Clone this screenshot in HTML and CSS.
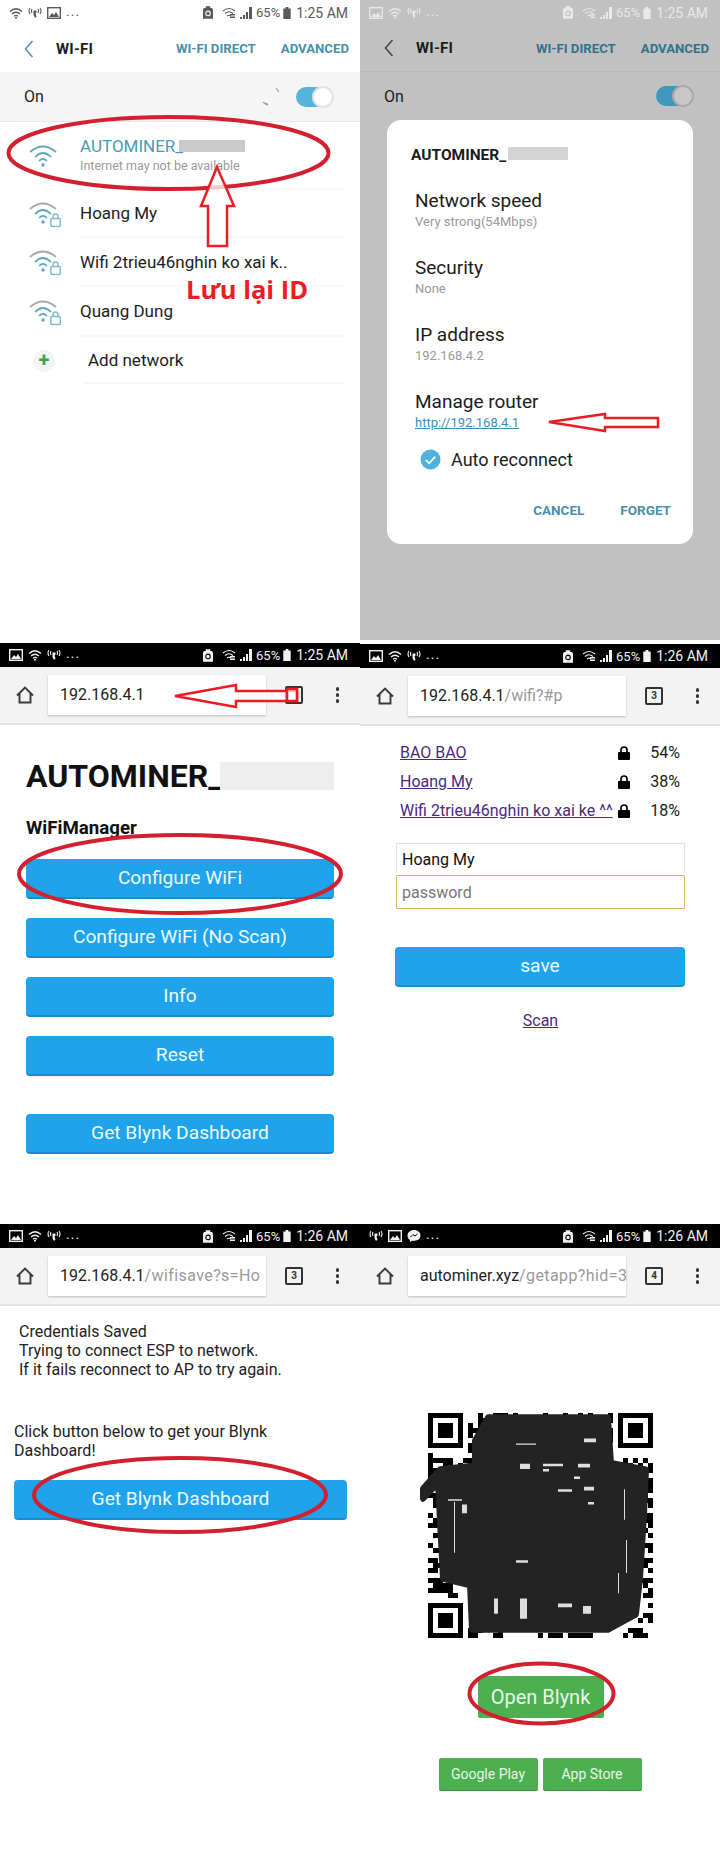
FILE: index.html
```html
<!DOCTYPE html>
<html lang="vi">
<head>
    <meta charset="UTF-8">
    <meta name="viewport" content="width=device-width, initial-scale=1.0">
    <title>Autominer WiFi</title>
    <link rel="stylesheet" href="styles.css">
</head>
<body>
    <svg class="defs">
        <symbol id="i-wifi" viewBox="0 0 14 12"><path d="M1 4.500Q7-1 13 4.500M3 7Q7 3.500 11 7M5 9.200Q7 7.700 9 9.200" fill="none" stroke="currentColor" stroke-width="1.300"/><circle cx="7" cy="10.800" r="1" fill="currentColor"/></symbol>
        <symbol id="i-call" viewBox="0 0 14 12"><path d="M2 1Q0 4 2 7M12 1Q14 4 12 7M4 2Q3 4 4 6M10 2Q11 4 10 6" fill="none" stroke="currentColor" stroke-width="1.100"/><path d="M5.500 3.500h3v2l-1 1 1 3-1.500 1.500-1.500-3v-2z" fill="currentColor"/></symbol>
        <symbol id="i-image" viewBox="0 0 14 12"><rect x=".7" y=".7" width="12.600" height="10.600" fill="none" stroke="currentColor" stroke-width="1.400"/><path d="M2 10l3-4 2 2 2-3 3 5z" fill="currentColor"/></symbol>
        <symbol id="i-chat" viewBox="0 0 14 12"><path d="M7 0C3 0 .5 2.500.5 5.500c0 2 1 3.500 2.500 4.500v2l2-1.200c3 .6 8.500-.8 8.500-5.300C13.500 2.500 11 0 7 0z" fill="currentColor"/><path d="M3.500 7l2.500-2.500 2 1.500 2.500-2" fill="none" stroke="#000" stroke-width="1"/></symbol>
        <symbol id="i-alarm" viewBox="0 0 11 14"><path d="M3 0h5v2h2l1 2v10H0V4l1-2h2z" fill="currentColor"/><circle cx="5.500" cy="8" r="2.500" fill="none" stroke="var(--status-bg)" stroke-width="1.200"/></symbol>
        <symbol id="i-wifi-x" viewBox="0 0 14 12"><path d="M1 4Q7-1 13 4M3 6.500Q7 3 11 6.500M5 9Q7 7.500 9 9" fill="none" stroke="currentColor" stroke-width="1.200"/><path d="M8 7h5v1.500H8zM8 9.500h5V11H8z" fill="currentColor"/></symbol>
        <symbol id="i-signal" viewBox="0 0 12 12"><path d="M0 12V10h2v2zM3 12V8h2v4zM6 12V5h2v7zM9 12V0h3v12z" fill="currentColor"/></symbol>
        <symbol id="i-battery" viewBox="0 0 8 13"><path d="M2.500 0h3v1.500H8V13H0V1.500h2.500z" fill="currentColor"/></symbol>
        <symbol id="i-back" viewBox="0 0 10 18"><path d="M8.500 1L1.500 9l7 8" fill="none" stroke="currentColor" stroke-width="1.500"/></symbol>
        <symbol id="i-home" viewBox="0 0 18 18"><path d="M1 9.500L9 1.500l8 8M3.500 7.500V16.500h11V7.500" fill="none" stroke="#3a3a3a" stroke-width="1.900"/></symbol>
        <symbol id="i-net" viewBox="0 0 30 24"><path d="M2 8Q15-3 28 8M7 13Q15 5 23 13M11 17Q15 13 19 17" fill="none" stroke="currentColor" stroke-width="1.700"/><circle cx="15" cy="21" r="1.700" fill="currentColor"/></symbol>
        <symbol id="i-netlock" viewBox="0 0 34 27"><path d="M2 8Q15-3 28 8" fill="none" stroke="#a8a8a8" stroke-width="1.700"/><path d="M7 13Q15 5 23 13M11 17Q15 13 19 17" fill="none" stroke="#5ea9c0" stroke-width="1.700"/><circle cx="15" cy="21" r="1.700" fill="#5ea9c0"/><rect x="22.800" y="17.500" width="9.500" height="8" rx="1" fill="#fff" stroke="#7fbcd0" stroke-width="1.500"/><path d="M25 17.500v-2a2.500 2.500 0 0 1 5 0v2" fill="none" stroke="#7fbcd0" stroke-width="1.500"/></symbol>
        <symbol id="i-lock" viewBox="0 0 12 14"><path d="M3 6V4a3 3 0 0 1 6 0v2" fill="none" stroke="#000" stroke-width="1.700"/><rect y="6" width="12" height="8" rx="1"/></symbol>
    </svg>

    <main class="collage">

        <section class="screen">
            <div class="status status-light">
                <div class="status-left">
                    <svg class="si"><use href="#i-wifi"/></svg>
                    <svg class="si"><use href="#i-call"/></svg>
                    <svg class="si"><use href="#i-image"/></svg>
                    <span class="more">...</span>
                </div>
                <div class="status-right">
                    <svg class="si-alarm"><use href="#i-alarm"/></svg>
                    <svg class="si"><use href="#i-wifi-x"/></svg>
                    <svg class="si"><use href="#i-signal"/></svg>
                    <span class="level">65%</span>
                    <svg class="si-batt"><use href="#i-battery"/></svg>
                    <span class="time">1:25 AM</span>
                </div>
            </div>
            <header class="appbar">
                <svg class="back"><use href="#i-back"/></svg>
                <h1>WI-FI</h1>
                <a class="appbar-link first">WI-FI DIRECT</a>
                <a class="appbar-link">ADVANCED</a>
            </header>
            <div class="on-row">
                <span>On</span>
                <svg class="spinner" viewBox="0 0 20 20"><path d="M15 1l3 4M2 15l4 3M5 16l2 2" stroke="#999" stroke-width="1.200" fill="none"/></svg>
                <span class="toggle"><i></i></span>
            </div>
            <ul class="netlist">
                <li class="net net-active">
                    <svg class="net-icon"><use href="#i-net"/></svg>
                    <div class="net-text">
                        <div class="net-name">AUTOMINER_<span class="redact r-list"></span></div>
                        <div class="net-sub">Internet may not be available</div>
                    </div>
                </li>
                <li class="net net-2">
                    <svg class="net-icon"><use href="#i-netlock"/></svg>
                    <div class="net-text"><div class="net-name">Hoang My</div></div>
                </li>
                <li class="net net-3">
                    <svg class="net-icon"><use href="#i-netlock"/></svg>
                    <div class="net-text"><div class="net-name">Wifi 2trieu46nghin ko xai k..</div></div>
                </li>
                <li class="net net-4">
                    <svg class="net-icon"><use href="#i-netlock"/></svg>
                    <div class="net-text"><div class="net-name">Quang Dung</div></div>
                </li>
                <li class="net net-5">
                    <span class="add-icon">+</span>
                    <div class="net-text add-text"><div class="net-name">Add network</div></div>
                </li>
            </ul>
            <svg class="marks">
                <ellipse cx="168.500" cy="153" rx="160" ry="36" class="ring"/>
                <path d="M217 167L201 206H208V246H227V206H234Z" class="arrow"/>
            </svg>
            <div class="note">Lưu lại ID</div>
        </section>

        <section class="screen dim">
            <div class="dim-area">
                <div class="status status-dim">
                    <div class="status-left">
                        <svg class="si"><use href="#i-image"/></svg>
                        <svg class="si"><use href="#i-wifi"/></svg>
                        <svg class="si"><use href="#i-call"/></svg>
                        <span class="more">...</span>
                    </div>
                    <div class="status-right">
                        <svg class="si-alarm"><use href="#i-alarm"/></svg>
                        <svg class="si"><use href="#i-wifi-x"/></svg>
                        <svg class="si"><use href="#i-signal"/></svg>
                        <span class="level">65%</span>
                        <svg class="si-batt"><use href="#i-battery"/></svg>
                        <span class="time">1:25 AM</span>
                    </div>
                </div>
                <header class="appbar appbar-dim">
                    <svg class="back"><use href="#i-back"/></svg>
                    <h1>WI-FI</h1>
                    <a class="appbar-link first">WI-FI DIRECT</a>
                    <a class="appbar-link">ADVANCED</a>
                </header>
                <div class="on-row on-dim">
                    <span>On</span>
                    <span class="toggle toggle-dim"><i></i></span>
                </div>
                <div class="dialog">
                    <h2>AUTOMINER_<span class="redact r-dialog"></span></h2>
                    <div class="field"><div class="field-name">Network speed</div><div class="field-val">Very strong(54Mbps)</div></div>
                    <div class="field"><div class="field-name">Security</div><div class="field-val">None</div></div>
                    <div class="field"><div class="field-name">IP address</div><div class="field-val">192.168.4.2</div></div>
                    <div class="field"><div class="field-name">Manage router</div><a class="field-val field-link">http://192.168.4.1</a></div>
                    <label class="auto">
                        <svg class="auto-check" viewBox="0 0 22 22"><circle cx="11" cy="11" r="10.500" fill="#4fb2dc"/><path d="M6 11.500l3.500 3.500 6.500-7" fill="none" stroke="#fff" stroke-width="1.800"/></svg>
                        Auto reconnect
                    </label>
                    <div class="dialog-actions"><a>CANCEL</a><a>FORGET</a></div>
                </div>
            </div>
            <svg class="marks">
                <path d="M189 422L245 414V418H298V427H245V431Z" class="arrow"/>
            </svg>
        </section>

        <section class="screen">
            <div class="status status-black status-tall">
                <div class="status-left">
                    <svg class="si"><use href="#i-image"/></svg>
                    <svg class="si"><use href="#i-wifi"/></svg>
                    <svg class="si"><use href="#i-call"/></svg>
                    <span class="more">...</span>
                </div>
                <div class="status-right">
                    <svg class="si-alarm"><use href="#i-alarm"/></svg>
                    <svg class="si"><use href="#i-wifi-x"/></svg>
                    <svg class="si"><use href="#i-signal"/></svg>
                    <span class="level">65%</span>
                    <svg class="si-batt"><use href="#i-battery"/></svg>
                    <span class="time">1:25 AM</span>
                </div>
            </div>
            <div class="toolbar toolbar-tall">
                <svg class="home"><use href="#i-home"/></svg>
                <div class="url">192.168.4.1</div>
                <span class="tabs"></span>
                <span class="dots"><i></i><i></i><i></i></span>
            </div>
            <div class="portal">
                <h1 class="portal-title">AUTOMINER_<span class="redact r-title"></span></h1>
                <h3 class="portal-sub">WiFiManager</h3>
                <a class="btn">Configure WiFi</a>
                <a class="btn">Configure WiFi (No Scan)</a>
                <a class="btn">Info</a>
                <a class="btn">Reset</a>
                <a class="btn btn-gap">Get Blynk Dashboard</a>
            </div>
            <svg class="marks">
                <ellipse cx="180" cy="231" rx="161" ry="39" class="ring"/>
                <path d="M175 53L236 42V48H297V58H236V64Z" class="arrow"/>
                <path d="M287 46h10v12h-10z" class="arrow"/>
            </svg>
        </section>

        <section class="screen screen-4">
            <div class="status status-black status-tall">
                <div class="status-left">
                    <svg class="si"><use href="#i-image"/></svg>
                    <svg class="si"><use href="#i-wifi"/></svg>
                    <svg class="si"><use href="#i-call"/></svg>
                    <span class="more">...</span>
                </div>
                <div class="status-right">
                    <svg class="si-alarm"><use href="#i-alarm"/></svg>
                    <svg class="si"><use href="#i-wifi-x"/></svg>
                    <svg class="si"><use href="#i-signal"/></svg>
                    <span class="level">65%</span>
                    <svg class="si-batt"><use href="#i-battery"/></svg>
                    <span class="time">1:26 AM</span>
                </div>
            </div>
            <div class="toolbar toolbar-tall">
                <svg class="home"><use href="#i-home"/></svg>
                <div class="url">192.168.4.1<span class="url-rest">/wifi?#p</span></div>
                <span class="tabs">3</span>
                <span class="dots"><i></i><i></i><i></i></span>
            </div>
            <div class="scan">
                <div class="scan-row"><a>BAO BAO</a><svg class="lock"><use href="#i-lock"/></svg><span class="pct">54%</span></div>
                <div class="scan-row"><a>Hoang My</a><svg class="lock"><use href="#i-lock"/></svg><span class="pct">38%</span></div>
                <div class="scan-row"><a>Wifi 2trieu46nghin ko xai ke ^^</a><svg class="lock"><use href="#i-lock"/></svg><span class="pct">18%</span></div>
            </div>
            <form class="wifi-form">
                <input class="ssid" type="text" value="Hoang My">
                <input class="pass" type="text" placeholder="password">
                <a class="btn btn-save">save</a>
                <a class="scan-link">Scan</a>
            </form>
        </section>

        <section class="screen screen-5">
            <div class="status status-black status-tall">
                <div class="status-left">
                    <svg class="si"><use href="#i-image"/></svg>
                    <svg class="si"><use href="#i-wifi"/></svg>
                    <svg class="si"><use href="#i-call"/></svg>
                    <span class="more">...</span>
                </div>
                <div class="status-right">
                    <svg class="si-alarm"><use href="#i-alarm"/></svg>
                    <svg class="si"><use href="#i-wifi-x"/></svg>
                    <svg class="si"><use href="#i-signal"/></svg>
                    <span class="level">65%</span>
                    <svg class="si-batt"><use href="#i-battery"/></svg>
                    <span class="time">1:26 AM</span>
                </div>
            </div>
            <div class="toolbar toolbar-tall">
                <svg class="home"><use href="#i-home"/></svg>
                <div class="url">192.168.4.1<span class="url-rest url-wide">/wifisave?s=Ho</span></div>
                <span class="tabs">3</span>
                <span class="dots"><i></i><i></i><i></i></span>
            </div>
            <div class="saved">
                <p class="saved-msg">Credentials Saved<br>Trying to connect ESP to network.<br>If it fails reconnect to AP to try again.</p>
                <p class="saved-click">Click button below to get your Blynk Dashboard!</p>
                <a class="btn btn-wide">Get Blynk Dashboard</a>
            </div>
            <svg class="marks">
                <ellipse cx="180" cy="274" rx="146" ry="37" class="ring"/>
            </svg>
        </section>

        <section class="screen screen-5">
            <div class="status status-black status-tall">
                <div class="status-left">
                    <svg class="si"><use href="#i-call"/></svg>
                    <svg class="si"><use href="#i-image"/></svg>
                    <svg class="si"><use href="#i-chat"/></svg>
                    <span class="more">...</span>
                </div>
                <div class="status-right">
                    <svg class="si-alarm"><use href="#i-alarm"/></svg>
                    <svg class="si"><use href="#i-wifi-x"/></svg>
                    <svg class="si"><use href="#i-signal"/></svg>
                    <span class="level">65%</span>
                    <svg class="si-batt"><use href="#i-battery"/></svg>
                    <span class="time">1:26 AM</span>
                </div>
            </div>
            <div class="toolbar toolbar-tall">
                <svg class="home"><use href="#i-home"/></svg>
                <div class="url">autominer.xyz<span class="url-rest url-wide">/getapp?hid=3</span></div>
                <span class="tabs">4</span>
                <span class="dots"><i></i><i></i><i></i></span>
            </div>
            <div class="getapp">
                <svg class="qr" viewBox="0 0 225 225">
                    <g transform="scale(5)" shape-rendering="crispEdges">
                        <path d="M0 0h7v7H0zM1 1v5h5V1zM2 2h3v3H2z M38 0h7v7h-7zM39 1v5h5V1zM40 2h3v3h-3z M0 38h7v7H0zM1 39v5h5v-5zM2 40h3v3H2z" fill-rule="evenodd"/>
                        <path stroke="#000" fill="none" d="M10 .5h1M13 .5h3M17 .5h1M23 .5h1M27 .5h1M30 .5h1M32 .5h1M36 .5h1M10 1.500h2M33 1.500h4M8 2.500h1M10 2.500h2M35 2.500h1M8 3.500h4M35 3.500h2M8 4.500h1M10 4.500h2M36 4.500h1M9 5.500h2M36 5.500h1M8 6.500h1M10 6.500h1M8 7.500h1M36 7.500h1M0 8.500h1M36 8.500h1M0 9.500h5M7 9.500h2M36 9.500h1M39 9.500h1M41 9.500h1M43 9.500h1M0 10.500h1M3 10.500h2M6 10.500h1M8 10.500h1M37 10.500h2M40 10.500h1M42 10.500h1M44 10.500h1M0 11.500h3M6 11.500h3M39 11.500h2M42 11.500h3M0 12.500h4M0 13.500h4M44 13.500h1M0 14.500h2M43 14.500h2M2 15.500h1M43 15.500h2M0 16.500h3M42 16.500h2M1 17.500h3M43 17.500h2M1 18.500h2M44 18.500h1M0 20.500h1M43 20.500h2M1 21.500h2M43 21.500h2M0 22.500h3M44 22.500h1M2 23.500h1M43 23.500h1M1 24.500h2M44 24.500h1M0 26.500h1M43 26.500h2M1 27.500h2M44 27.500h1M0 29.500h2M43 29.500h2M1 30.500h3M43 30.500h1M0 31.500h2M44 31.500h1M0 33.500h3M42 33.500h3M1 34.500h4M43 34.500h1M0 35.500h5M44 35.500h1M4 36.500h2M43 36.500h2M44 38.500h1M43 40.500h2M42 41.500h1M44 41.500h1M8 43.500h3M14 43.500h1M40 43.500h3M8 44.500h2M13 44.500h2M22 44.500h1M24 44.500h3M28 44.500h5M39 44.500h1M41 44.500h3"/>
                    </g>
                    <g transform="scale(1 1.270)">
                        <path class="qr-smear" d="M47 22L60 4H180L183 40L218 45L216 80L212 130L208 158L180 170H44L42 135L15 130L10 55L-5 67V60L12 45L47 42Z"/>
                        <path class="qr-slits" d="M88 24h20v1H88zM92 40h10v4H92zM115 40h20v2h-20zM115 44h6v2h-6zM150 40h12v3h-12zM156 20h12v3h-12zM130 60h14v2h-14zM156 58h10v3h-10zM34 72h5v7h-5zM20 68h14v1H20zM88 116h12v2H88zM160 70h6v2h-6zM146 50h6v2h-6zM66 146h4v12h-4zM92 146h7v16h-7zM130 150h14v3h-14zM155 152h8v6h-8zM196 60h1v24h-1zM198 100h1v26h-1zM26 70h1v40h-1zM190 126h1v16h-1z"/>
                    </g>
                </svg>
                <a class="g-btn g-open">Open Blynk</a>
                <div class="stores">
                    <a class="g-btn g-store">Google Play</a>
                    <a class="g-btn g-store">App Store</a>
                </div>
            </div>
            <svg class="marks">
                <ellipse cx="181.500" cy="472.500" rx="72" ry="30" class="ring"/>
            </svg>
        </section>

    </main>
</body>
</html>
```
FILE: styles.css
```css
* {
    box-sizing: border-box;
}
html, body {
    margin: 0;
    padding: 0;
}
body {
    width: 720px;
    height: 1876px;
    overflow: hidden;
    background: #fff;
    color: #1c1c1c;
    font-family: Roboto, "Noto Sans", sans-serif;
}
a {
    text-decoration: none;
}
h1, h2, h3, p, ul {
    margin: 0;
    padding: 0;
}
ul {
    list-style: none;
}
.defs {
    display: none;
}
.collage {
    display: grid;
    grid-template-columns: 360px 360px;
    grid-template-rows: 643px 578px 655px;
}
.screen {
    position: relative;
    overflow: hidden;
    background: #fff;
}
.screen-4 {
    padding-top: 1px;
}
.screen-5 {
    padding-top: 3px;
}

/* annotations painted over the screenshots */
.marks {
    position: absolute;
    left: 0;
    top: 0;
    width: 360px;
    height: 100%;
    overflow: visible;
    pointer-events: none;
}
.ring {
    fill: none;
    stroke: #d3202e;
    stroke-width: 4;
}
.arrow {
    fill: #fff;
    fill-opacity: .75;
    stroke: #ed1c24;
    stroke-width: 2.500;
}
.note {
    position: absolute;
    left: 186px;
    top: 272px;
    font-family: "Open Sans", sans-serif;
    font-weight: 700;
    font-size: 25.500px;
    line-height: 34px;
    color: #ee1c25;
    white-space: nowrap;
}
.redact {
    display: inline-block;
    background: #cbcbcb;
}
.r-list {
    width: 66px;
    height: 12px;
    margin-left: -4px;
}
.r-dialog {
    width: 60px;
    height: 13px;
    margin-left: 2px;
    background: #d4d4d4;
}
.r-title {
    width: 120px;
    height: 28px;
    margin-left: -2px;
    background: #eee;
}

/* status bars */
.status {
    --status-bg: #fff;
    display: flex;
    justify-content: space-between;
    align-items: center;
    height: 25px;
    padding: 0 12px 0 9px;
    font-size: 14px;
    white-space: nowrap;
}
.status-left, .status-right {
    display: flex;
    align-items: center;
}
.status-left {
    gap: 5px;
}
.status-right {
    gap: 3px;
}
.si {
    width: 14px;
    height: 12px;
}
.si-alarm {
    width: 10px;
    height: 13px;
    margin-right: 6px;
}
.si-batt {
    width: 8px;
    height: 12px;
}
.more {
    margin-top: -4px;
    letter-spacing: 1px;
}
.level {
    font-size: 13px;
}
.time {
    margin-left: 2px;
}
.status-light {
    color: #5a5a5a;
}
.status-dim {
    --status-bg: #c1c1c1;
    color: #e8e8e8;
}
.status-black {
    --status-bg: #000;
    background: #000;
    color: #f2f2f2;
}
.status-tall {
    height: 24px;
}

/* settings header */
.appbar {
    display: flex;
    align-items: center;
    height: 47px;
    padding: 0 11px 0 24px;
    background: #fff;
}
.back {
    width: 10px;
    height: 18px;
    color: #4d95ad;
}
.appbar h1 {
    margin-left: 22px;
    font-size: 15px;
    font-weight: 700;
    letter-spacing: .2px;
}
.appbar-link {
    font-size: 13.200px;
    font-weight: 700;
    color: #4a90a8;
}
.appbar-link.first {
    margin-left: auto;
    margin-right: 25px;
}
.appbar-dim {
    background: transparent;
    border-bottom: 1px solid #b8b8b8;
}
.appbar-dim .back {
    color: #444;
}
.appbar-dim .appbar-link {
    color: #33728a;
}
.on-row {
    display: flex;
    align-items: center;
    height: 50px;
    padding: 0 27px 0 24px;
    background: #f5f5f5;
    font-size: 16px;
    border-bottom: 1px solid #e8e8e8;
}
.on-dim {
    height: 48px;
    background: transparent;
    border-bottom: 0;
}
.spinner {
    width: 20px;
    height: 20px;
    margin-left: auto;
    margin-right: 15px;
}
.toggle {
    position: relative;
    width: 37px;
    height: 20px;
    border-radius: 10px;
    background: #55b3dc;
}
.toggle i {
    position: absolute;
    right: -1px;
    top: -1px;
    width: 22px;
    height: 22px;
    border-radius: 50%;
    background: #fff;
    border: 2px solid #e2e2e2;
}
.toggle-dim {
    margin-left: auto;
    background: #3f97bc;
}
.toggle-dim i {
    background: #c8c8c8;
    border-color: #a9a9a9;
}

/* network list */
.net {
    display: flex;
    align-items: stretch;
    height: 49px;
}
.net-active {
    height: 68px;
}
.net-2 { height: 48px; }
.net-4 { height: 50px; }
.net-5 { height: 47px; }
.net-icon {
    flex: none;
    align-self: center;
    width: 34px;
    height: 27px;
    margin: 0 18px 0 28px;
    color: #5ea9c0;
}
.net-active .net-icon {
    width: 30px;
    height: 24px;
    margin-right: 22px;
}
.net-text {
    display: flex;
    flex-direction: column;
    justify-content: center;
    flex: 1;
    margin-right: 15px;
    border-bottom: 2px solid #f8f8f8;
    font-size: 17px;
}
.net-name {
    white-space: nowrap;
}
.net-active .net-name {
    color: #4a9ab5;
    line-height: 20px;
}
.net-sub {
    margin-top: 1px;
    font-size: 12.500px;
    color: #9a9a9a;
    line-height: 18px;
}
.add-icon {
    flex: none;
    align-self: center;
    width: 22px;
    height: 22px;
    margin: 0 29px 0 33px;
    border-radius: 50%;
    background: #f4f4f4;
    color: #43a047;
    font-size: 20px;
    font-weight: 700;
    line-height: 21px;
    text-align: center;
}
.add-text {
    padding-left: 4px;
}

/* dimmed details dialog */
.dim-area {
    height: 640px;
    background: #c1c1c1;
}
.dialog {
    width: 306px;
    height: 424px;
    margin-left: 27px;
    padding: 23px 22px 0 24px;
    border-radius: 14px;
    background: #fff;
}
.dialog h2 {
    height: 24px;
    font-size: 15.500px;
    font-weight: 700;
    line-height: 24px;
    white-space: nowrap;
}
.field {
    height: 67px;
    padding-left: 4px;
}
.dialog h2 + .field {
    margin-top: 23px;
}
.field-name {
    font-size: 19px;
    line-height: 22px;
}
.field-val {
    display: block;
    margin-top: 1px;
    font-size: 13px;
    line-height: 18px;
    color: #999;
}
.field-link {
    color: #3d8fb0;
    text-decoration: underline;
}
.auto {
    display: flex;
    align-items: center;
    gap: 10px;
    height: 24px;
    margin: -11px 0 0 9px;
    font-size: 18px;
}
.auto-check {
    width: 21px;
    height: 21px;
}
.dialog-actions {
    display: flex;
    justify-content: flex-end;
    gap: 36px;
    margin-top: 31px;
    font-size: 13.500px;
    font-weight: 700;
    color: #4a90a8;
}

/* browser toolbar */
.toolbar {
    display: flex;
    align-items: center;
    height: 58px;
    padding: 0 21px 0 16px;
    background: #f3f3f3;
    border-bottom: 2px solid #e2e2e2;
}
.home {
    flex: none;
    width: 18px;
    height: 18px;
    margin-right: 14px;
}
.url {
    flex: none;
    width: 218px;
    height: 40px;
    padding: 0 2px 0 12px;
    overflow: hidden;
    background: #fff;
    box-shadow: 0 1px 2px rgba(0, 0, 0, .22);
    font-size: 16px;
    line-height: 40px;
    white-space: nowrap;
    color: #222;
}
.url-rest {
    color: #9a9a9a;
}
.url-wide {
    letter-spacing: .4px;
}
.tabs {
    flex: none;
    width: 18px;
    height: 18px;
    margin-left: 19px;
    border: 2px solid #333;
    border-radius: 2px;
    font-size: 10px;
    font-weight: 700;
    line-height: 14px;
    text-align: center;
    color: #333;
}
.dots {
    display: flex;
    flex-direction: column;
    gap: 2.500px;
    margin-left: auto;
}
.dots i {
    width: 3.500px;
    height: 3.500px;
    border-radius: 50%;
    background: #333;
}

/* captive portal pages */
.portal {
    padding: 0 26px;
}
.portal-title {
    display: flex;
    align-items: center;
    height: 38px;
    margin-top: 32px;
    font-size: 32px;
    font-weight: 700;
    color: #111;
}
.portal-sub {
    margin-top: 22px;
    font-size: 18.700px;
    font-weight: 700;
    line-height: 22px;
    color: #111;
}
.btn {
    display: block;
    height: 40px;
    margin-top: 19px;
    border-radius: 4px;
    border-bottom: 2px solid #1b8bcb;
    background: #1fa3ec;
    color: #ecfaff;
    font-size: 19.200px;
    line-height: 38px;
    text-align: center;
}
.portal-sub + .btn {
    margin-top: 20px;
}
.btn-gap {
    margin-top: 38px;
}
.scan {
    padding: 12px 40px 0;
}
.scan-row {
    display: flex;
    align-items: center;
    height: 29px;
    font-size: 16px;
    white-space: nowrap;
}
.scan-row a {
    flex: 1;
    color: #4b2a7b;
}
.scan-row a, .scan-link {
    text-decoration: underline;
}
.lock {
    width: 12px;
    height: 14px;
    margin: 0 0 0 5px;
}
.pct {
    width: 50px;
    text-align: right;
}
.wifi-form {
    display: flex;
    flex-direction: column;
    padding: 18px 35px 0 36px;
}
.wifi-form input {
    width: 100%;
    outline: 0;
    border-radius: 1px;
    font: 16px Roboto, sans-serif;
    color: #111;
    background: #fff;
}
.ssid {
    height: 30px;
    padding: 2px 5px 0;
    border: 1px solid #e3e3e3;
    border-bottom: 0;
}
.pass {
    height: 34px;
    margin-top: 2px;
    padding: 0 5px;
    border: 1.500px solid #d9b469;
}
.pass::placeholder {
    color: #777;
}
.btn-save {
    margin: 38px 0 0 -1px;
}
.scan-link {
    margin-top: 24px;
    color: #4b2a7b;
    font-size: 16px;
    line-height: 20px;
    text-align: center;
}
.saved {
    padding: 0 13px 0 14px;
    font-size: 16px;
    line-height: 19px;
    color: #222;
}
.saved-msg {
    margin-top: 16px;
    padding-left: 5px;
}
.saved-click {
    margin-top: 43px;
    width: 300px;
}
.btn-wide {
    margin-top: 20px;
}

/* app download page */
.getapp {
    display: flex;
    flex-direction: column;
    align-items: center;
}
.qr {
    width: 225px;
    height: 225px;
    margin: 107px 0 0 1px;
    overflow: visible;
}
.qr-smear {
    fill: #232323;
    stroke: #232323;
    stroke-width: 6;
    stroke-linejoin: round;
}
.qr-slits {
    fill: #fff;
    opacity: .85;
}
.g-btn {
    display: block;
    border-radius: 2px;
    background: #4caf50;
    color: #e9f7ea;
    text-align: center;
}
.g-open {
    width: 126px;
    height: 42px;
    margin-top: 38px;
    margin-left: 1px;
    font-size: 20px;
    line-height: 42px;
}
.stores {
    display: flex;
    gap: 5px;
    margin-top: 40px;
}
.g-store {
    width: 99px;
    height: 33px;
    font-size: 14px;
    line-height: 33px;
    border-bottom: 1px solid #3f9143;
}
```
